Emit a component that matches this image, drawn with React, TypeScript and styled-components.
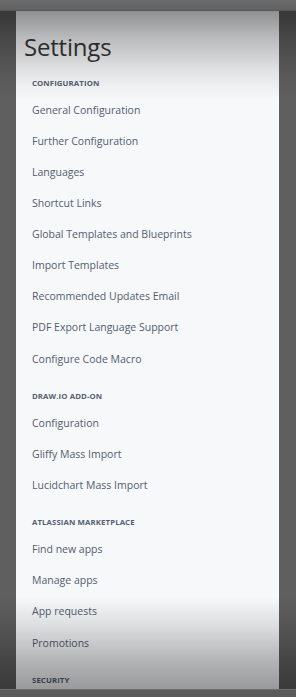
import React from "react";
import styled, { createGlobalStyle } from "styled-components";

const GlobalStyle = createGlobalStyle`
  html, body {
    margin: 0;
    padding: 0;
    background: #5f5f5f;
    overflow: hidden;
  }
`;

const Frame = styled.div`
  width: 296px;
  height: 697px;
  display: flex;
  flex-direction: column;
  background: #5f5f5f;
  position: relative;
  overflow: hidden;
`;

const TopBar = styled.div`
  height: 11px;
  flex: none;
  background: linear-gradient(#6b6b6b, #626262);
  border-bottom: 1px solid #555;
  box-sizing: border-box;
`;

const BottomBar = styled.div`
  height: 8px;
  flex: none;
  background: #5a5a5a;
  border-top: 1px solid #6e6e6e;
  box-sizing: border-box;
`;

const Middle = styled.div`
  flex: 1;
  display: flex;
  min-height: 0;
`;

const Strip = styled.div<{ $w: number }>`
  width: ${(p) => p.$w}px;
  flex: none;
  background: #5f5f5f;
`;

const Panel = styled.nav`
  flex: 1;
  background: #f7f8fa;
  overflow: hidden;
  font-family: "Open Sans", "Noto Sans", sans-serif;
`;

const Title = styled.h1`
  margin: 0;
  padding: 20px 0 0 8px;
  height: 60.5px;
  box-sizing: border-box;
  font-family: "Open Sans", "Noto Sans", sans-serif;
  font-weight: 400;
  font-size: 24px;
  line-height: 32px;
  color: #363636;
  letter-spacing: -0.2px;
`;

const Section = styled.section`
  & + & {
    margin-top: 10px;
  }
`;

const Heading = styled.h2`
  margin: 0;
  padding-left: 16px;
  height: 23px;
  line-height: 23px;
  font-size: 7.8px;
  font-weight: 700;
  text-transform: uppercase;
  color: #545f72;
  letter-spacing: 0.1px;
`;

const Item = styled.a`
  display: block;
  padding-left: 16px;
  height: 31.15px;
  line-height: 31px;
  font-size: 10.5px;
  color: #525d70;
  text-decoration: none;
  white-space: nowrap;
`;

const Shade = styled.div<{ $top: boolean }>`
  position: absolute;
  left: 0;
  right: 0;
  pointer-events: none;
  ${(p) =>
    p.$top
      ? `top: 11px; height: 88px; background: linear-gradient(rgba(0,0,0,0.42), rgba(0,0,0,0.25) 30%, rgba(0,0,0,0.08) 70%, rgba(0,0,0,0));`
      : `bottom: 8px; height: 92px; background: linear-gradient(rgba(0,0,0,0), rgba(0,0,0,0.1) 30%, rgba(0,0,0,0.28) 70%, rgba(0,0,0,0.38));`}
`;

const sections: { title: string; items: string[] }[] = [
  {
    title: "Configuration",
    items: [
      "General Configuration",
      "Further Configuration",
      "Languages",
      "Shortcut Links",
      "Global Templates and Blueprints",
      "Import Templates",
      "Recommended Updates Email",
      "PDF Export Language Support",
      "Configure Code Macro",
    ],
  },
  {
    title: "Draw.io Add-on",
    items: ["Configuration", "Gliffy Mass Import", "Lucidchart Mass Import"],
  },
  {
    title: "Atlassian Marketplace",
    items: ["Find new apps", "Manage apps", "App requests", "Promotions"],
  },
  { title: "Security", items: [] },
];

export default function App() {
  return (
    <>
      <GlobalStyle />
      <Frame>
        <TopBar />
        <Middle>
          <Strip $w={16} />
          <Panel>
            <Title>Settings</Title>
            {sections.map((s) => (
              <Section key={s.title}>
                <Heading>{s.title}</Heading>
                {s.items.map((i) => (
                  <Item key={i} href="#">
                    {i}
                  </Item>
                ))}
              </Section>
            ))}
          </Panel>
          <Strip $w={17} />
        </Middle>
        <BottomBar />
        <Shade $top />
        <Shade $top={false} />
      </Frame>
    </>
  );
}
